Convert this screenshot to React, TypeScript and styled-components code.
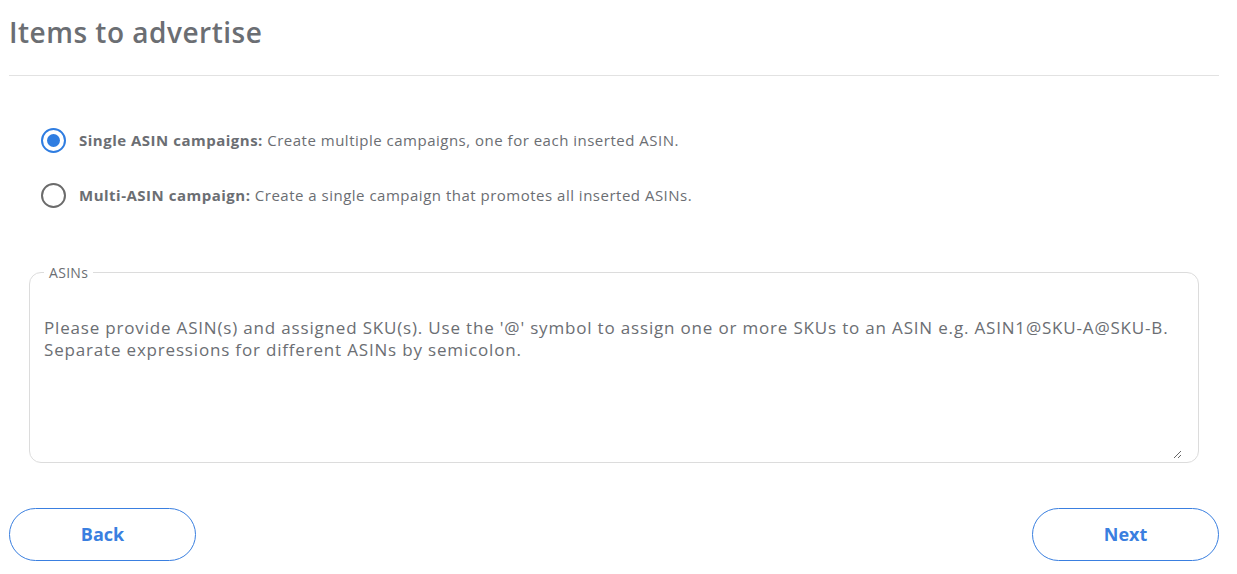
import { createGlobalStyle, styled } from "styled-components";
import { useState } from "react";

const GlobalStyle = createGlobalStyle`
  html, body {
    margin: 0;
    padding: 0;
    background: #ffffff;
  }
  body {
    font-family: "Open Sans", "Liberation Sans", sans-serif;
    color: #6b6e73;
  }
`;

const Page = styled.div`
  width: 1210px;
  padding: 0 0 0 9px;
  display: flex;
  flex-direction: column;
`;

const Title = styled.h2`
  margin: 0;
  padding-top: 13px;
  height: 75px;
  box-sizing: border-box;
  font-size: 28px;
  font-weight: 600;
  color: #6b6e73;
  letter-spacing: 0.5px;
`;

const Divider = styled.hr`
  margin: 0;
  border: none;
  border-top: 1px solid #e2e2e2;
`;

const Options = styled.div`
  display: flex;
  flex-direction: column;
  gap: 31px;
  padding: 52px 0 0 32px;
`;

const OptionRow = styled.label`
  display: flex;
  align-items: center;
  gap: 13px;
  height: 24px;
  cursor: pointer;
  font-size: 15px;
  letter-spacing: 0.5px;
  color: #6b6e73;
`;

const RadioCircle = styled.span<{ $checked: boolean }>`
  width: 25px;
  height: 25px;
  box-sizing: border-box;
  border-radius: 50%;
  border: 2px solid ${(p) => (p.$checked ? "#2f7de1" : "#6b6b6b")};
  display: flex;
  align-items: center;
  justify-content: center;
  flex-shrink: 0;

  &::after {
    content: "";
    width: 13px;
    height: 13px;
    border-radius: 50%;
    background: #2f7de1;
    display: ${(p) => (p.$checked ? "block" : "none")};
  }
`;

const Strong = styled.b`
  font-weight: 700;
  color: #6b6e73;
`;

const Field = styled.fieldset`
  margin: 56px 20px 0 20px;
  padding: 0 16px 0 0;
  border: 1px solid #dcdcdc;
  border-radius: 12px;
  height: 200px;
  box-sizing: border-box;
`;

const Legend = styled.legend`
  margin-left: 14px;
  padding: 0 5px;
  font-size: 14px;
  letter-spacing: 0.3px;
  color: #6b6e73;
`;

const AsinInput = styled.textarea`
  display: block;
  width: 100%;
  height: 177px;
  box-sizing: border-box;
  border: none;
  outline: none;
  background: transparent;
  resize: vertical;
  margin: 0;
  padding: 35px 0 0 14px;
  font-family: "Open Sans", "Liberation Sans", sans-serif;
  font-size: 17px;
  letter-spacing: 0.82px;
  line-height: 22px;
  color: #555;

  &::placeholder {
    color: #6b6e73;
    opacity: 1;
  }
`;

const Footer = styled.div`
  display: flex;
  justify-content: space-between;
  padding-top: 45px;
`;

const PillButton = styled.button`
  width: 187px;
  height: 53px;
  padding: 0 0 2px;
  border-radius: 27px;
  border: 1px solid #3a7fe0;
  background: #fff;
  color: #3a7fe0;
  font-family: "Open Sans", "Liberation Sans", sans-serif;
  font-size: 18px;
  font-weight: 700;
  cursor: pointer;
`;

const options = [
  {
    id: "single",
    title: "Single ASIN campaigns:",
    text: "Create multiple campaigns, one for each inserted ASIN.",
  },
  {
    id: "multi",
    title: "Multi-ASIN campaign:",
    text: "Create a single campaign that promotes all inserted ASINs.",
  },
];

export default function App() {
  const [mode, setMode] = useState("single");

  return (
    <>
      <GlobalStyle />
      <Page>
        <Title>Items to advertise</Title>
        <Divider />
        <Options>
          {options.map((o) => (
            <OptionRow key={o.id} onClick={() => setMode(o.id)}>
              <RadioCircle $checked={mode === o.id} />
              <span>
                <Strong>{o.title}</Strong> {o.text}
              </span>
            </OptionRow>
          ))}
        </Options>
        <Field>
          <Legend>ASINs</Legend>
          <AsinInput placeholder="Please provide ASIN(s) and assigned SKU(s). Use the '@' symbol to assign one or more SKUs to an ASIN e.g. ASIN1@SKU-A@SKU-B. Separate expressions for different ASINs by semicolon." />
        </Field>
        <Footer>
          <PillButton>Back</PillButton>
          <PillButton>Next</PillButton>
        </Footer>
      </Page>
    </>
  );
}
